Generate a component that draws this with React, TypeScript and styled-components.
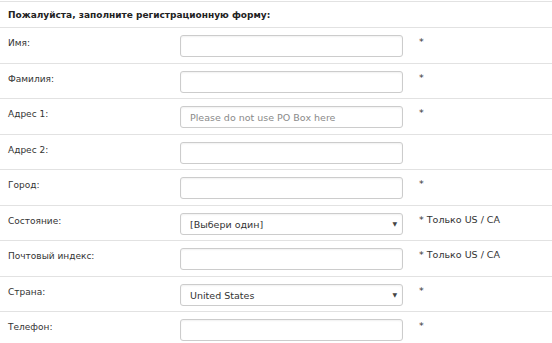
import { createGlobalStyle, styled } from "styled-components";

const GlobalStyle = createGlobalStyle`
  html, body {
    margin: 0;
    padding: 0;
    background: #ffffff;
  }
  body {
    font-family: "DejaVu Sans", Verdana, sans-serif;
    font-size: 9px;
    color: #333333;
  }
`;

type Field = {
  label: string;
  kind: "input" | "select";
  value?: string;
  placeholder?: string;
  note?: string;
};

const fields: Field[] = [
  { label: "Имя:", kind: "input", note: "*" },
  { label: "Фамилия:", kind: "input", note: "*" },
  { label: "Адрес 1:", kind: "input", placeholder: "Please do not use PO Box here", note: "*" },
  { label: "Адрес 2:", kind: "input" },
  { label: "Город:", kind: "input", note: "*" },
  { label: "Состояние:", kind: "select", value: "[Выбери один]", note: "* Только US / CA" },
  { label: "Почтовый индекс:", kind: "input", note: "* Только US / CA" },
  { label: "Страна:", kind: "select", value: "United States", note: "*" },
  { label: "Телефон:", kind: "input", note: "*" },
];

function App() {
  return (
    <>
      <GlobalStyle />
      <StForm>
        <StHeader>Пожалуйста, заполните регистрационную форму:</StHeader>
        {fields.map((f) => (
          <StRow key={f.label}>
            <StLabel>{f.label}</StLabel>
            {f.kind === "input" ? (
              <StInput placeholder={f.placeholder} />
            ) : (
              <StSelectBox>
                <StSelect defaultValue={f.value}>
                  <option>{f.value}</option>
                </StSelect>
                <StArrow>▼</StArrow>
              </StSelectBox>
            )}
            <StNote>{f.note}</StNote>
          </StRow>
        ))}
      </StForm>
    </>
  );
}

export default App;

const StForm = styled.form`
  display: flex;
  flex-direction: column;
  margin-top: 1px;
  border-top: 1px solid #e2e2e2;
`;

const StHeader = styled.div`
  height: 25px;
  line-height: 27px;
  padding-left: 8px;
  font-weight: 700;
  color: #222222;
  border-bottom: 1px solid #e2e2e2;
`;

const StRow = styled.div`
  display: grid;
  grid-template-columns: 172px 223px 1fr;
  align-items: start;
  height: 34.5px;
  padding-left: 8px;
  border-bottom: 1px solid #e2e2e2;
`;

const StLabel = styled.div`
  padding-top: 10px;
  color: #333333;
`;

const StInput = styled.input`
  box-sizing: border-box;
  margin-top: 7px;
  width: 223px;
  height: 22px;
  padding: 1px 9px 0;
  border: 1px solid #cccccc;
  border-radius: 3px;
  box-shadow: inset 0 1px 2px rgba(0, 0, 0, 0.06);
  font-family: "DejaVu Sans", Verdana, sans-serif;
  font-size: 9.5px;
  color: #333333;
  outline: none;

  &::placeholder {
    color: #8a8a8a;
  }
`;

const StSelectBox = styled.div`
  position: relative;
  margin-top: 7px;
  width: 223px;
  height: 22px;
`;

const StSelect = styled.select`
  appearance: none;
  box-sizing: border-box;
  width: 100%;
  height: 100%;
  padding: 1px 9px 0;
  border: 1px solid #cccccc;
  border-radius: 3px;
  background: #ffffff;
  box-shadow: inset 0 1px 2px rgba(0, 0, 0, 0.06);
  font-family: "DejaVu Sans", Verdana, sans-serif;
  font-size: 9.5px;
  color: #333333;
  outline: none;
`;

const StArrow = styled.span`
  position: absolute;
  right: 6px;
  top: 7px;
  font-size: 6px;
  color: #444444;
  pointer-events: none;
`;

const StNote = styled.div`
  padding-top: 8px;
  padding-left: 16px;
  font-size: 9.5px;
  color: #333333;
  white-space: nowrap;
`;
